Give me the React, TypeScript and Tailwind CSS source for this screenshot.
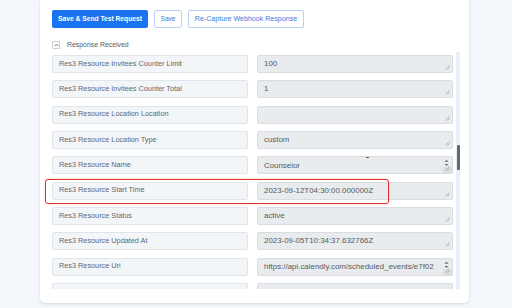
import React from "react";

const rows: { label: string; value: string; scroll?: boolean; cut?: boolean }[] = [
  { label: "Res3 Resource Invitees Counter Limit", value: "100" },
  { label: "Res3 Resource Invitees Counter Total", value: "1" },
  { label: "Res3 Resource Location Location", value: "" },
  { label: "Res3 Resource Location Type", value: "custom" },
  { label: "Res3 Resource Name", value: "Counselor", scroll: true, cut: true },
  { label: "Res3 Resource Start Time", value: "2023-09-12T04:30:00.000000Z" },
  { label: "Res3 Resource Status", value: "active" },
  { label: "Res3 Resource Updated At", value: "2023-09-05T10:34:37.632766Z" },
  { label: "Res3 Resource Uri", value: "https://api.calendly.com/scheduled_events/e7f02", scroll: true },
  { label: "", value: "" },
];

function Grip() {
  return (
    <svg width="5" height="5" viewBox="0 0 5 5" className="absolute right-[2px] bottom-[2px]">
      <line x1="0.5" y1="4.5" x2="4.5" y2="0.5" stroke="#8a8f95" strokeWidth="0.6" />
      <line x1="2.5" y1="4.5" x2="4.5" y2="2.5" stroke="#8a8f95" strokeWidth="0.6" />
    </svg>
  );
}

function ScrollArrows() {
  return (
    <>
      <svg width="5" height="8" viewBox="0 0 5 8" className="absolute right-[3px] top-[2px]">
        <path d="M0.5 2.8 L2.5 0.8 L4.5 2.8 Z" fill="#6b6f74" />
        <path d="M0.5 5 L2.5 7 L4.5 5 Z" fill="#6b6f74" />
      </svg>
      <div className="absolute right-0 bottom-0 w-[9px] h-[6px] bg-[#dcdee0]" />
    </>
  );
}

export default function App() {
  return (
    <div className="relative w-[512px] h-[308px] bg-[#f3f6fa] overflow-hidden font-['Liberation_Sans',Arial,sans-serif]">
      <div className="ml-[40px] w-[429px] h-[303px] bg-white rounded-b-[5px] shadow-[0_1px_3px_rgba(0,0,0,0.12)] pt-[10px] pl-[12px] flex flex-col">
        <div className="flex gap-[6px] h-[18px]">
          <div className="w-[96px] h-[18px] rounded-[2px] bg-[#1a73f0] text-white text-[6.7px] font-bold flex items-center justify-center">
            Save &amp; Send Test Request
          </div>
          <div className="w-[28px] h-[18px] rounded-[2px] border border-[#b9cff5] text-[#3c7be0] text-[6.6px] flex items-center justify-center">
            Save
          </div>
          <div className="w-[116px] h-[18px] rounded-[2px] border border-[#b9cff5] text-[#3c7be0] text-[7.1px] flex items-center justify-center">
            Re-Capture Webhook Response
          </div>
        </div>
        <div className="mt-[13px] h-[8px] flex items-center">
          <div className="w-[8px] h-[8px] border border-[#c5ccd5] rounded-[1px] flex items-center justify-center">
            <svg width="5" height="4" viewBox="0 0 5 4">
              <path d="M0.8 3 L2.5 1.2 L4.2 3" fill="none" stroke="#555" strokeWidth="0.8" />
            </svg>
          </div>
          <span className="ml-[7px] text-[6.9px] text-[#555c66] font-medium">Response Received</span>
        </div>
        <div className="mt-[3px] h-[237px] flex overflow-hidden">
          <div className="w-[401px] pt-[3px] flex flex-col gap-[7.33px]">
            {rows.map((r, i) => (
              <div key={i} className="flex gap-[9px] shrink-0">
                <div className="w-[196px] h-[18px] shrink-0 rounded-[2px] bg-[#f3f6f9] border border-[#e0e5eb] flex items-center pl-[6px] text-[7.3px] text-[#5f6670] whitespace-nowrap">
                  {r.label}
                </div>
                <div className="relative w-[196px] h-[18px] shrink-0 rounded-[2px] bg-[#e9ecef] border border-[#d9dde2] flex items-center pl-[6px] text-[7.9px] text-[#555a60] whitespace-nowrap overflow-hidden">
                  {r.cut && <div className="absolute left-[108px] top-0 w-[3px] h-[1px] bg-[#666]" />}
                  <span className={r.cut ? "mt-[2px]" : ""}>{r.value}</span>
                  {r.scroll ? <ScrollArrows /> : null}
                  <Grip />
                </div>
              </div>
            ))}
          </div>
          <div className="relative ml-[3px] w-[4px] h-[237px] bg-[#e6f0fc]">
            <div className="absolute left-[1px] top-[93px] w-[2.5px] h-[25px] bg-[#666a6e] rounded-[1px]" />
          </div>
        </div>
      </div>
      <div className="absolute left-[45px] top-[179px] w-[344px] h-[25px] border border-[#e0312f] rounded-[3px] shadow-[0_0_2px_rgba(224,49,47,0.35)]" />
    </div>
  );
}
